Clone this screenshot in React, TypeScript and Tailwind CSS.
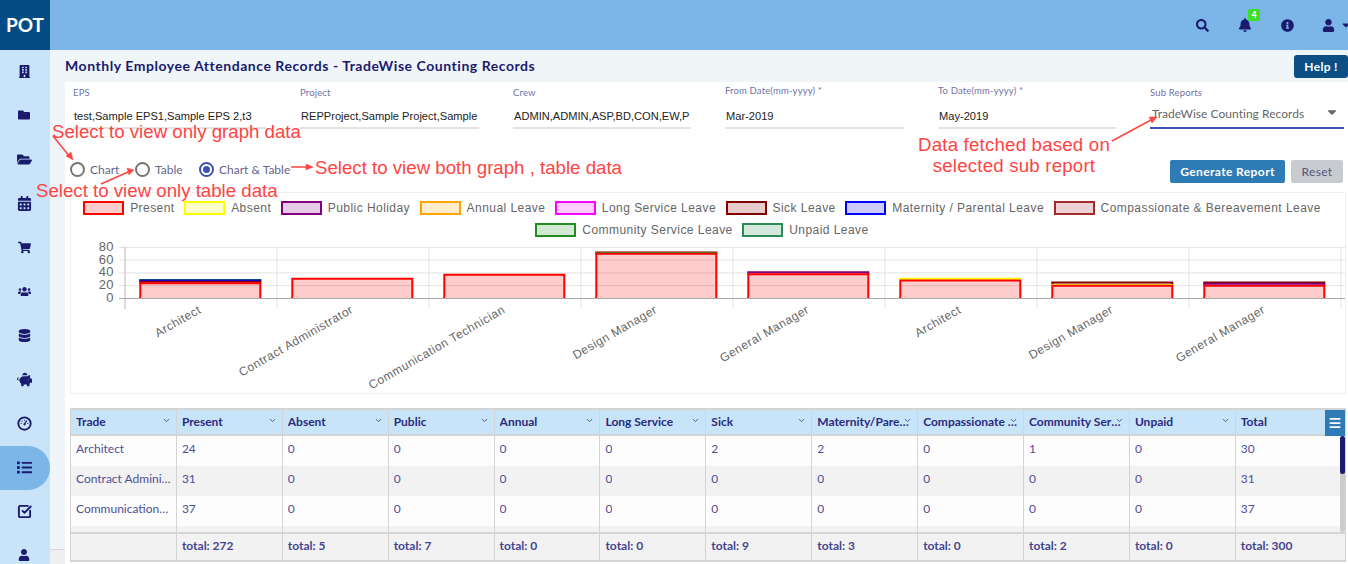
import React from 'react';
import { ChevronDown, Menu, SquareCheckBig } from 'lucide-react';
import {
  FaBell,
  FaBuilding,
  FaCalendarAlt,
  FaCaretDown,
  FaDatabase,
  FaFolder,
  FaFolderOpen,
  FaInfoCircle,
  FaList,
  FaPiggyBank,
  FaSearch,
  FaShoppingCart,
  FaUser,
  FaUsers
} from 'react-icons/fa';

const GaugeIcon = ({ size }: { size: number }) => (
  <svg width={size} height={size} viewBox="0 0 16 16" fill="none" stroke="currentColor">
    <circle cx="8" cy="8" r="6.6" strokeWidth="2" />
    <path d="M8 8.5L10.5 5" strokeWidth="1.4" />
    <path d="M4 8h1M8 4v1M5 5.2l.7.7M11 8h1" strokeWidth="1.1" />
    <circle cx="8" cy="8.8" r="1.2" fill="currentColor" stroke="none" />
  </svg>
);

const CheckIcon = ({ size }: { size: number }) => <SquareCheckBig size={size} strokeWidth={3} />;

const navIcons = [
  { Icon: FaBuilding, size: 13 },
  { Icon: FaFolder, size: 12 },
  { Icon: FaFolderOpen, size: 15 },
  { Icon: FaCalendarAlt, size: 15 },
  { Icon: FaShoppingCart, size: 13 },
  { Icon: FaUsers, size: 13 },
  { Icon: FaDatabase, size: 13 },
  { Icon: FaPiggyBank, size: 15 },
  { Icon: GaugeIcon, size: 15 },
  { Icon: FaList, size: 15 },
  { Icon: CheckIcon, size: 15 },
  { Icon: FaUser, size: 12 }
];

const fields = [
  { label: 'EPS', value: 'test,Sample EPS1,Sample EPS 2,t3', width: 'w-[193px]', pad: 'pt-[5px]' },
  { label: 'Project', value: 'REPProject,Sample Project,Sample', width: 'w-[179px]', pad: 'pt-[5px]' },
  { label: 'Crew', value: 'ADMIN,ADMIN,ASP,BD,CON,EW,P', width: 'w-[178px]', pad: 'pt-[5px]' },
  { label: 'From Date(mm-yyyy) *', value: 'Mar-2019', width: 'w-[179px]', pad: 'pt-[3px]' },
  { label: 'To Date(mm-yyyy) *', value: 'May-2019', width: 'w-[178px]', pad: 'pt-[3px]' }
];

const colors = {
  present: { stroke: '#ff0000', fill: '#ffcccc' },
  absent: { stroke: '#ffff00', fill: '#ffffcc' },
  holiday: { stroke: '#800080', fill: '#e6cce6' },
  annual: { stroke: '#ffa500', fill: '#ffedcc' },
  long: { stroke: '#ff00ff', fill: '#ffccff' },
  sick: { stroke: '#800000', fill: '#e6cccc' },
  maternity: { stroke: '#0000ff', fill: '#ccccff' },
  compassionate: { stroke: '#a52a2a', fill: '#edd4d4' },
  community: { stroke: '#228b22', fill: '#d3e8d3' },
  unpaid: { stroke: '#2e8b57', fill: '#d5e8dd' }
};

const legendRows = [
  [
    { label: 'Present', ...colors.present },
    { label: 'Absent', ...colors.absent },
    { label: 'Public Holiday', ...colors.holiday },
    { label: 'Annual Leave', ...colors.annual },
    { label: 'Long Service Leave', ...colors.long },
    { label: 'Sick Leave', ...colors.sick },
    { label: 'Maternity / Parental Leave', ...colors.maternity },
    { label: 'Compassionate & Bereavement Leave', ...colors.compassionate }
  ],
  [
    { label: 'Community Service Leave', ...colors.community },
    { label: 'Unpaid Leave', ...colors.unpaid }
  ]
];

// stacks from the bottom up
const bars = [
  { label: 'Architect', stack: [[24, 'present'], [2, 'sick'], [2, 'maternity'], [1, 'community']] },
  { label: 'Contract Administrator', stack: [[31, 'present']] },
  { label: 'Communication Technician', stack: [[37, 'present']] },
  { label: 'Design Manager', stack: [[70, 'present'], [1, 'community'], [1, 'sick']] },
  { label: 'General Manager', stack: [[38, 'present'], [3, 'holiday']] },
  { label: 'Architect', stack: [[28, 'present'], [3, 'absent']] },
  { label: 'Design Manager', stack: [[20, 'present'], [1, 'absent'], [4, 'sick']] },
  { label: 'General Manager', stack: [[20, 'present'], [3, 'holiday'], [2, 'sick']] }
] as { label: string; stack: [number, keyof typeof colors][] }[];

const columns = [
  'Trade',
  'Present',
  'Absent',
  'Public',
  'Annual',
  'Long Service',
  'Sick',
  'Maternity/Parental',
  'Compassionate & Bereavement',
  'Community Service',
  'Unpaid',
  'Total'
];

const rows = [
  ['Architect', '24', '0', '0', '0', '0', '2', '2', '0', '1', '0', '30'],
  ['Contract Administrator', '31', '0', '0', '0', '0', '0', '0', '0', '0', '0', '31'],
  ['Communication Technician', '37', '0', '0', '0', '0', '0', '0', '0', '0', '0', '37'],
  ['', '', '', '', '', '', '', '', '', '', '', '']
];

const totals = ['', 'total: 272', 'total: 5', 'total: 7', 'total: 0', 'total: 0', 'total: 9', 'total: 3', 'total: 0', 'total: 2', 'total: 0', 'total: 300'];

const Chart = () => {
  const yFor = (v: number) => 298.5 - v * 0.64;
  return (
    <svg viewBox="70 240 1274 152" className="block h-[152px] w-[1274px]">
      {[80, 60, 40, 20].map((v) => (
        <line key={v} x1={118} x2={1344} y1={yFor(v)} y2={yFor(v)} stroke="#e2e2e2" />
      ))}
      {[0, 1, 2, 3, 4, 5, 6, 7, 8].map((i) => (
        <line key={i} x1={124 + i * 152} x2={124 + i * 152} y1={247} y2={309} stroke="#e4e4e4" />
      ))}
      <line x1={124} x2={124} y1={247} y2={309} stroke="#c4c4c4" />
      {bars.map((bar, i) => {
        const left = 139.3 + i * 152;
        let base = 0;
        const segments = bar.stack.map(([v, key]) => {
          const seg = { top: yFor(base + v), bottom: yFor(base), c: colors[key] };
          base += v;
          return seg;
        });
        // lower segments are painted last so their strokes stay on top
        return (
          <g key={i}>
            {[...segments].reverse().map((s, j) => (
              <path
                key={j}
                d={`M${left} ${s.bottom}V${s.top}H${left + 120}V${s.bottom}`}
                fill={s.c.stroke}
                fillOpacity={0.2}
                stroke={s.c.stroke}
                strokeWidth={2}
              />
            ))}
          </g>
        );
      })}
      <line x1={118} x2={1344} y1={298.5} y2={298.5} stroke="#aaaaaa" />
      {[80, 60, 40, 20, 0].map((v) => (
        <text
          key={v}
          x={113}
          y={yFor(v) + 3.5}
          textAnchor="end"
          fill="#666666"
          fontSize={13}
          letterSpacing={0.4}
          fontFamily="'Liberation Sans', Arial, sans-serif"
        >
          {v}
        </text>
      ))}
      {bars.map((bar, i) => (
        <text
          key={i}
          x={0}
          y={0}
          transform={`translate(${201 + i * 152} 312) rotate(-30)`}
          textAnchor="end"
          fill="#666666"
          fontSize={12}
          letterSpacing={0.5}
          fontFamily="'Liberation Sans', Arial, sans-serif"
        >
          {bar.label}
        </text>
      ))}
    </svg>
  );
};

const Annotations = () => (
  <div className="pointer-events-none absolute inset-0 font-['Liberation_Sans',Arial,sans-serif] text-[18.67px] leading-[21px] text-[#ff4444]">
    <div className="absolute left-[52px] top-[121px] whitespace-nowrap">Select to view only graph data</div>
    <div className="absolute left-[36px] top-[180px] whitespace-nowrap">Select to view only table data</div>
    <div className="absolute left-[315px] top-[157px] whitespace-nowrap">Select to view both graph , table data</div>
    <div className="absolute left-[900px] top-[134px] w-[228px] text-center tracking-[0.2px]">
      Data fetched based on
      <br />
      selected sub report
    </div>
    <svg viewBox="0 0 1348 564" className="absolute left-0 top-0 h-[564px] w-[1348px]" fill="#ff4444" stroke="#ff4444">
      <path d="M53 136L70 157" strokeWidth={1.5} />
      <path d="M73 160L66 156L71 152Z" strokeWidth={0.5} />
      <path d="M101 184L128 172" strokeWidth={1.5} />
      <path d="M134 170L127 168L129 175Z" strokeWidth={0.5} />
      <path d="M291 167L307 167" strokeWidth={1.5} />
      <path d="M313 167L306 164V170Z" strokeWidth={0.5} />
      <path d="M1112 141L1151 120" strokeWidth={1.5} />
      <path d="M1157 117L1149 117L1152 123Z" strokeWidth={0.5} />
    </svg>
  </div>
);

const Radio = ({ label, checked, className }: { label: string; checked?: boolean; className: string }) => (
  <label className={`flex items-center gap-[5px] ${className}`}>
    <span
      className={`flex h-[15px] w-[15px] items-center justify-center rounded-full border-2 ${
        checked ? 'border-[#3f51b5]' : 'border-[#757575]'
      }`}
    >
      {checked && <span className="h-[7px] w-[7px] rounded-full bg-[#3f51b5]" />}
    </span>
    <span className="text-[12px] text-[#66668f]">{label}</span>
  </label>
);

export default function App() {
  return (
    <div className="relative flex h-[564px] w-[1348px] overflow-hidden bg-[#f0f5f8] font-['Lato',sans-serif]">
      {/* sidebar */}
      <aside className="flex h-[564px] w-[50px] shrink-0 flex-col overflow-hidden bg-[#c9e4f9]">
        <div className="flex h-[50px] shrink-0 items-center justify-center bg-[#034c83] text-[19px] font-bold text-white">POT</div>
        {navIcons.map(({ Icon, size }, i) => (
          <div
            key={i}
            className={`flex h-[44px] shrink-0 items-center justify-center pb-[2px] pr-[2px] text-[#1a1a6e] ${
              i === 9 ? 'rounded-r-[22px] bg-[#7cb6e8]' : ''
            }`}
          >
            <Icon size={size} />
          </div>
        ))}
      </aside>

      <div className="flex min-w-0 flex-1 flex-col">
        {/* top bar */}
        <header className="flex h-[50px] shrink-0 items-center justify-end bg-[#7cb6e8] text-[#1a1a6e]">
          <FaSearch size={13} className="mr-[29px]" />
          <div className="relative mr-[29px]">
            <FaBell size={14} />
            <span className="absolute left-[10px] top-[-9px] flex h-[12px] w-[12px] items-center justify-center rounded-[2px] bg-[#3de020] text-[9px] font-bold text-white">
              4
            </span>
          </div>
          <FaInfoCircle size={13} className="mr-[28px]" />
          <FaUser size={13} />
          <FaCaretDown size={12} className="ml-[5px] mr-[-4px]" />
        </header>

        <div className="flex min-h-0 flex-1">
          {/* left gutter */}
          <div className="flex w-[15px] shrink-0 flex-col">
            <div className="flex-1" />
            <div className="h-[15px] border-t border-[#d8d8d8] bg-[#efefef]" />
          </div>

          <main className="flex min-w-0 flex-1 flex-col">
            <div className="flex h-[32px] shrink-0 items-center justify-between">
              <h1 className="pb-[1px] text-[14px] font-bold tracking-[0.54px] text-[#1a1a6e]">
                Monthly Employee Attendance Records - TradeWise Counting Records
              </h1>
              <button className="mt-[1px] h-[23px] w-[54px] rounded-[3px] bg-[#0b4f85] text-[12px] font-bold tracking-[0.3px] text-white">
                Help !
              </button>
            </div>

            <section className="flex min-h-0 flex-1 flex-col bg-white pl-[5px]">
              {/* filters */}
              <div className="flex h-[48px] shrink-0 gap-[34px] pl-[3px]">
                {fields.map((f) => (
                  <div key={f.label} className={`h-[47px] shrink-0 border-b-2 border-[#e3e3e3] ${f.width} ${f.pad}`}>
                    <div className="text-[9.5px] leading-[12px] tracking-[0.15px] text-[#7272a6]">{f.label}</div>
                    <div className={`whitespace-nowrap pl-[1px] font-['Liberation_Sans',Arial,sans-serif] text-[11.1px] leading-[14px] text-[#222222] ${f.pad === 'pt-[5px]' ? 'mt-[10px]' : 'mt-[12px]'}`}>
                      {f.value}
                    </div>
                  </div>
                ))}
                <div className="h-[47px] w-[194px] shrink-0 border-b-2 border-[#3f51b5] pt-[5px]">
                  <div className="text-[9.5px] leading-[12px] tracking-[0.15px] text-[#7272a6]">Sub Reports</div>
                  <div className="mt-[6px] flex items-center justify-between pl-[2px] pr-[5px]">
                    <span className="text-[12px] leading-[14px] tracking-[0.03px] text-[#666666]">TradeWise Counting Records</span>
                    <FaCaretDown size={14} className="mb-[3px] text-[#666666]" />
                  </div>
                </div>
              </div>

              {/* view mode and actions */}
              <div className="mt-[30px] flex h-[23px] shrink-0 items-center justify-between pr-[5px]">
                <div className="mb-[4px] flex items-center">
                  <Radio label="Chart" className="w-[65px]" />
                  <Radio label="Table" className="w-[64px]" />
                  <Radio label="Chart & Table" checked className="" />
                </div>
                <div className="flex gap-[6px]">
                  <button className="h-[23px] w-[115px] rounded-[2px] bg-[#2e7bb6] text-[12px] font-bold tracking-[0.4px] text-white">
                    Generate Report
                  </button>
                  <button className="h-[23px] w-[52px] rounded-[2px] bg-[#c8cbd0] text-[12px] tracking-[0.3px] text-[#55557a]">
                    Reset
                  </button>
                </div>
              </div>

              {/* chart */}
              <div className="mr-[2px] mt-[9px] h-[202px] shrink-0 border border-[#f0f0f0] pt-[7px]">
                {legendRows.map((row, i) => (
                  <div key={i} className={`flex h-[15px] justify-center gap-[9.5px] pr-[12px] ${i === 1 ? 'mt-[7px]' : ''}`}>
                    {row.map((item) => (
                      <div key={item.label} className="flex items-center gap-[6px]">
                        <span
                          className="h-[14px] w-[41px] border-2"
                          style={{ borderColor: item.stroke, backgroundColor: item.fill }}
                        />
                        <span className="whitespace-nowrap font-['Liberation_Sans',Arial,sans-serif] text-[12px] tracking-[0.45px] text-[#666666]">
                          {item.label}
                        </span>
                      </div>
                    ))}
                  </div>
                ))}
                <div className="mt-[3px]">
                  <Chart />
                </div>
              </div>

              {/* table */}
              <div className="relative mr-[2px] mt-[14px] shrink-0 border-x border-t-2 border-[#d4d4d4] text-[12px]">
                <div className="grid h-[26px] grid-cols-[repeat(11,105.9px)_1fr] border-b-2 border-[#d4d4d4] bg-[#c8e4f9]">
                  {columns.map((c) => (
                    <div key={c} className="relative flex items-center border-r border-[#d4d4d4] px-[5px] last:border-r-0">
                      <span className="truncate font-bold text-[#2b2b7f]">{c}</span>
                      <ChevronDown size={9} className="absolute right-[5px] top-[6px] text-[#2b2b7f]" />
                    </div>
                  ))}
                </div>
                <div className="h-[96px] overflow-hidden">
                  {rows.map((row, i) => (
                    <div
                      key={i}
                      className={`grid h-[30px] grid-cols-[repeat(11,105.9px)_1fr] ${i % 2 === 0 ? 'bg-[#fdfdfd]' : 'bg-[#f2f2f2]'}`}
                    >
                      {row.map((cell, j) => (
                        <div key={j} className="flex items-center border-r border-[#d4d4d4] px-[5px] pb-[5px] last:border-r-0">
                          <span className="truncate text-[#4f4f96]">{cell}</span>
                        </div>
                      ))}
                    </div>
                  ))}
                </div>
                <div className="grid h-[30px] grid-cols-[repeat(11,105.9px)_1fr] border-y-2 border-[#d4d4d4] bg-[#f2f2f2]">
                  {totals.map((t, i) => (
                    <div key={i} className="flex items-center border-r border-[#d4d4d4] px-[5px] pb-[2px] font-bold text-[#45458f] last:border-r-0">
                      {t}
                    </div>
                  ))}
                </div>
                {/* column menu and scrollbar sit over the grid */}
                <button className="absolute right-0 top-0 flex h-[26px] w-[20px] items-center justify-center bg-[#2e7bb6] text-white">
                  <Menu size={14} strokeWidth={3} />
                </button>
                <div className="absolute right-0 top-[26px] h-[96px] w-[5px] rounded-full bg-[#cccccc]">
                  <div className="h-[38px] rounded-full bg-[#1a1a6e]" />
                </div>
              </div>
            </section>
          </main>
        </div>
      </div>

      <Annotations />
    </div>
  );
}
